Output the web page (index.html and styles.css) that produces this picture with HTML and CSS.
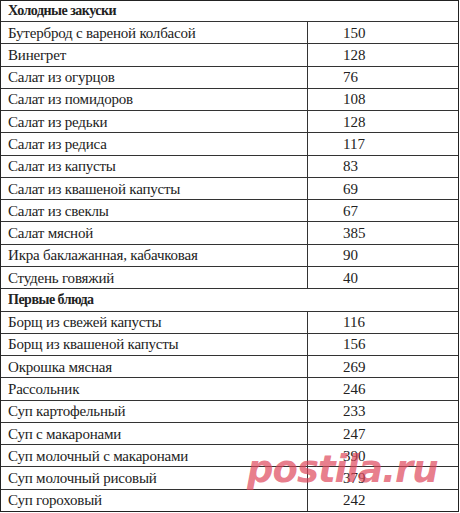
FILE: index.html
```html
<!DOCTYPE html>
<html>
<head>
<meta charset="utf-8">
<link rel="stylesheet" href="styles.css">
</head>
<body>
<div class="page">
<div class="menu">
<div class="row head"><span>Холодные закуски</span></div>
<div class="row"><span>Бутерброд с вареной колбасой</span><span>150</span></div>
<div class="row"><span>Винегрет</span><span>128</span></div>
<div class="row"><span>Салат из огурцов</span><span>76</span></div>
<div class="row"><span>Салат из помидоров</span><span>108</span></div>
<div class="row"><span>Салат из редьки</span><span>128</span></div>
<div class="row"><span>Салат из редиса</span><span>117</span></div>
<div class="row"><span>Салат из капусты</span><span>83</span></div>
<div class="row"><span>Салат из квашеной капусты</span><span>69</span></div>
<div class="row"><span>Салат из свеклы</span><span>67</span></div>
<div class="row"><span>Салат мясной</span><span>385</span></div>
<div class="row"><span>Икра баклажанная, кабачковая</span><span>90</span></div>
<div class="row"><span>Студень говяжий</span><span>40</span></div>
<div class="row head"><span>Первые блюда</span></div>
<div class="row"><span>Борщ из свежей капусты</span><span>116</span></div>
<div class="row"><span>Борщ из квашеной капусты</span><span>156</span></div>
<div class="row"><span>Окрошка мясная</span><span>269</span></div>
<div class="row"><span>Рассольник</span><span>246</span></div>
<div class="row"><span>Суп картофельный</span><span>233</span></div>
<div class="row"><span>Суп с макаронами</span><span>247</span></div>
<div class="row"><span>Суп молочный с макаронами</span><span>390</span></div>
<div class="row"><span>Суп молочный рисовый</span><span>379</span></div>
<div class="row"><span>Суп гороховый</span><span>242</span></div>
</div>
<div class="mark">postila.ru</div>
</div>
</body>
</html>
```
FILE: styles.css
```css
html, body {
  margin: 0;
  padding: 0;
  background: #fff;
}
.page {
  position: relative;
  width: 460px;
  height: 513px;
  overflow: hidden;
}
.menu {
  display: grid;
  grid-template-rows: 20px repeat(22, 1fr);
  width: 459px;
  height: 512px;
  box-sizing: border-box;
  border: 1px solid #222;
  font-family: "Liberation Serif", serif;
  font-size: 15px;
  color: #222;
  letter-spacing: -0.2px;
}
.row {
  display: grid;
  grid-template-columns: 306px 1fr;
  align-items: center;
  border-top: 1px solid #333;
}
.row:first-child {
  border-top: none;
}
.row span {
  padding-left: 7px;
  white-space: nowrap;
  line-height: 18px;
}
.row span + span {
  align-self: stretch;
  display: flex;
  align-items: center;
  border-left: 1px solid #333;
  padding-left: 35px;
  letter-spacing: 0;
}
.head {
  grid-template-columns: 1fr;
  font-weight: bold;
  font-size: 14px;
  letter-spacing: -0.5px;
}
.mark {
  position: absolute;
  left: 247px;
  top: 448px;
  font-family: "DejaVu Sans", sans-serif;
  font-weight: bold;
  font-style: italic;
  font-size: 37px;
  letter-spacing: -1px;
  color: rgba(222, 70, 90, 0.7);
}
```
